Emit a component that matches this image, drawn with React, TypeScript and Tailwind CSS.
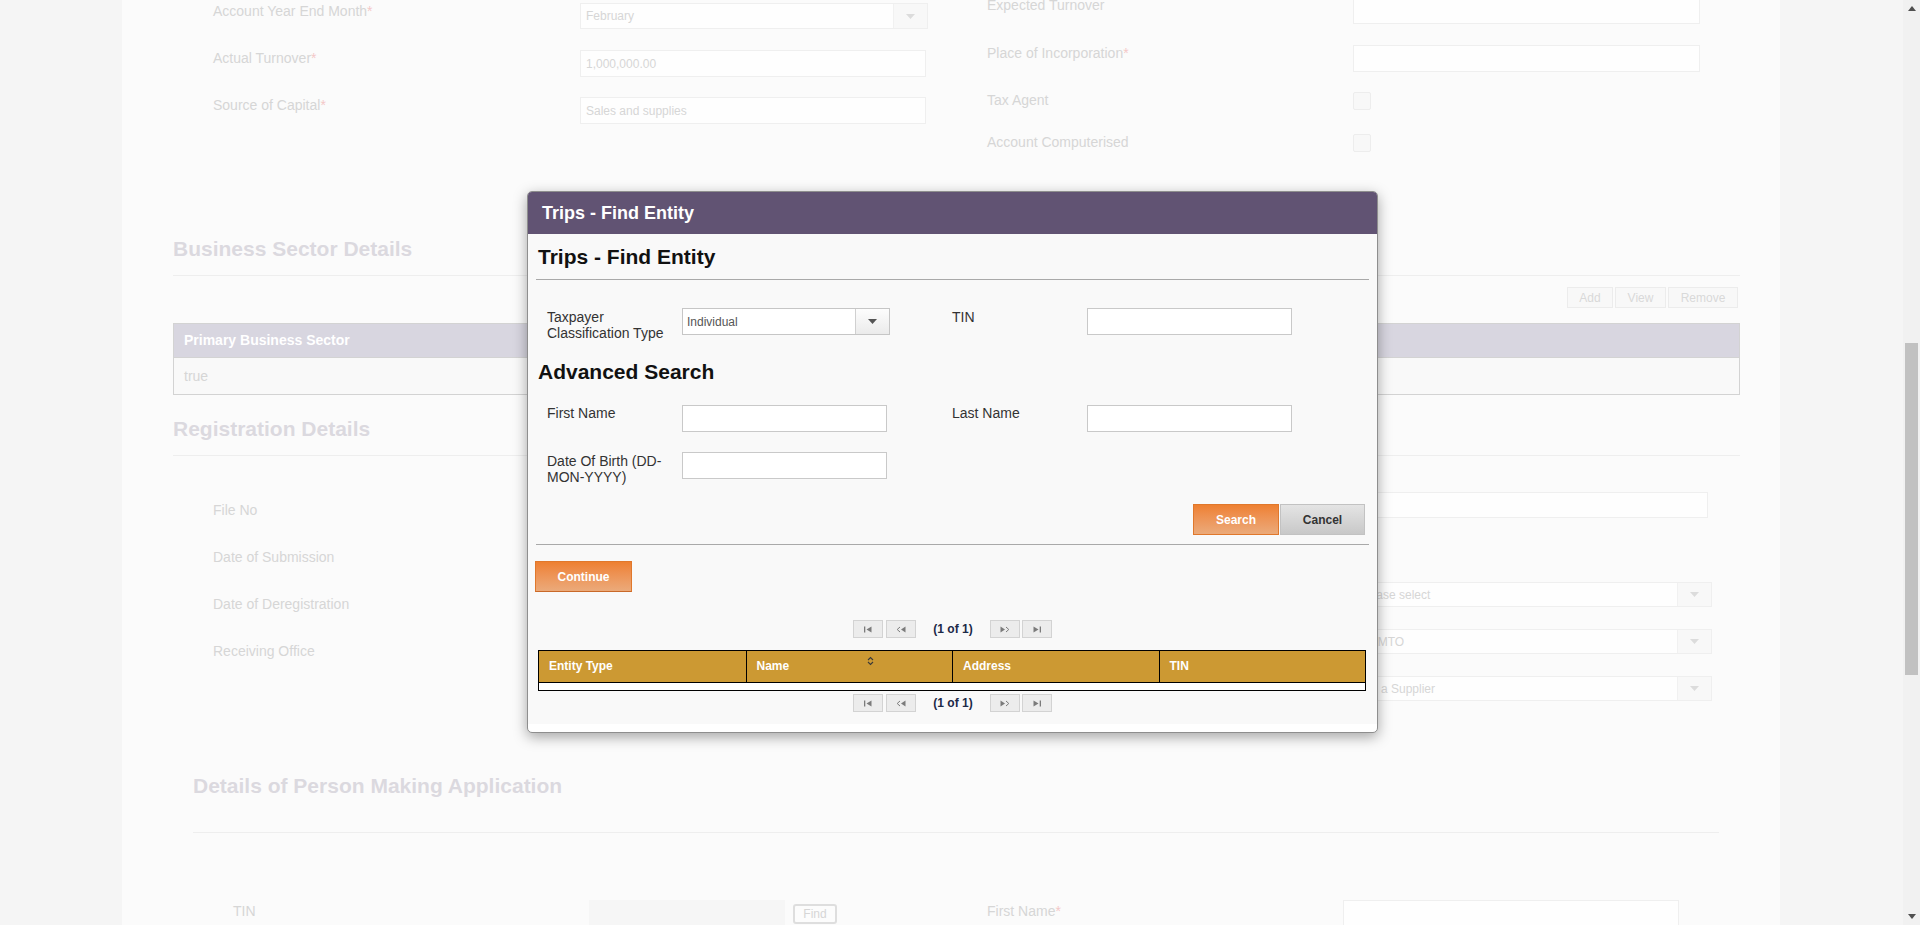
import React from "react";

function Caret({ className }: { className: string }) {
  return (
    <svg width="9" height="5" viewBox="0 0 9 5" className={className}>
      <path d="M0 0h9L4.5 5z" fill="currentColor" />
    </svg>
  );
}

function FadedLabel({ text, req }: { text: string; req?: boolean }) {
  return (
    <div className="text-[14px] leading-4 text-[#d6d6d6]">
      {text}
      {req && <span className="text-[#f4c8c8]">*</span>}
    </div>
  );
}

function FadedInput({ value, className }: { value?: string; className: string }) {
  return (
    <div className={`flex items-center border border-[#efefef] bg-[#fefefe] pl-[5px] text-[12px] text-[#d6d6d6] ${className}`}>
      {value}
    </div>
  );
}

function FadedSelect({ value, className }: { value: string; className: string }) {
  return (
    <div className={`flex border border-[#efefef] bg-[#fefefe] ${className}`}>
      <span className="flex flex-1 items-center pl-[5px] text-[12px] text-[#d6d6d6]">{value}</span>
      <span className="flex w-[34px] items-center justify-center border-l border-[#f1f1f1] bg-[#f8f8f8]">
        <Caret className="text-[#dcdcdc]" />
      </span>
    </div>
  );
}

function FadedCheck() {
  return <div className="h-[18px] w-[18px] rounded-[2px] border border-[#ededed] bg-[#f8f8f8]" />;
}

function FormRow({
  label,
  req,
  h,
  labelW,
  children,
}: {
  label: string;
  req?: boolean;
  h: string;
  labelW: string;
  children?: React.ReactNode;
}) {
  return (
    <div className={`flex items-start ${h}`}>
      <div className={`shrink-0 ${labelW}`}>
        <FadedLabel text={label} req={req} />
      </div>
      {children}
    </div>
  );
}

function TopForm() {
  return (
    <div className="flex h-[237px] items-start">
      <div className="ml-[91px] flex w-[715px] flex-col pt-[3px]">
        <FormRow label="Account Year End Month" req h="h-[47px]" labelW="w-[367px]">
          <FadedSelect value="February" className="h-[26px] w-[348px]" />
        </FormRow>
        <FormRow label="Actual Turnover" req h="h-[47px]" labelW="w-[367px]">
          <FadedInput value="1,000,000.00" className="h-[27px] w-[346px]" />
        </FormRow>
        <FormRow label="Source of Capital" req h="h-[47px]" labelW="w-[367px]">
          <FadedInput value="Sales and supplies" className="h-[27px] w-[346px]" />
        </FormRow>
      </div>
      <div className="-mt-[3px] ml-[59px] flex w-[713px] flex-col">
        <FormRow label="Expected Turnover" h="h-[48px]" labelW="w-[366px]">
          <FadedInput className="h-[27px] w-[347px]" />
        </FormRow>
        <FormRow label="Place of Incorporation" req h="h-[47px]" labelW="w-[366px]">
          <FadedInput className="h-[27px] w-[347px]" />
        </FormRow>
        <FormRow label="Tax Agent" h="h-[42px]" labelW="w-[366px]">
          <FadedCheck />
        </FormRow>
        <FormRow label="Account Computerised" h="h-[18px]" labelW="w-[366px]">
          <FadedCheck />
        </FormRow>
      </div>
    </div>
  );
}

function FadedHeading({ children }: { children: React.ReactNode }) {
  return <h2 className="h-[24px] text-[21px] font-bold leading-[24px] text-[#dbd9df]">{children}</h2>;
}

function BusinessSection() {
  return (
    <section className="ml-[51px] w-[1567px]">
      <FadedHeading>Business Sector Details</FadedHeading>
      <div className="mt-[14px] h-px bg-[#eeeeee]" />
      <div className="mt-[11px] flex h-[21px] justify-end gap-[2px] pr-[2px]">
        {[
          { t: "Add", w: "w-[46px]" },
          { t: "View", w: "w-[51px]" },
          { t: "Remove", w: "w-[70px]" },
        ].map((b) => (
          <div
            key={b.t}
            className={`flex items-center justify-center border border-[#ececec] bg-[#f8f8f8] text-[12px] text-[#d9d9d9] ${b.w}`}
          >
            {b.t}
          </div>
        ))}
      </div>
      <div className="mt-[15px] border border-[#d3d3d3]">
        <div className="flex h-[33px] items-center bg-[#d8d6e0] pl-[10px] text-[14px] font-bold text-white">
          Primary Business Sector
        </div>
        <div className="flex h-[37px] items-center border-t border-[#d3d3d3] bg-[#f9f9f9] pl-[10px] text-[14px] text-[#d6d6d6]">
          true
        </div>
      </div>

      <div className="mt-[22px]">
        <FadedHeading>Registration Details</FadedHeading>
      </div>
      <div className="mt-[14px] h-px bg-[#eeeeee]" />
      <div className="flex h-[318px] items-start">
        <div className="ml-[40px] flex w-[1140px] flex-col pt-[46px]">
          <FormRow label="File No" h="h-[47px]" labelW="w-[367px]" />
          <FormRow label="Date of Submission" h="h-[47px]" labelW="w-[367px]" />
          <FormRow label="Date of Deregistration" h="h-[47px]" labelW="w-[367px]" />
          <FormRow label="Receiving Office" h="h-[47px]" labelW="w-[367px]" />
        </div>
        <div className="flex w-[359px] flex-col pt-[36px]">
          <FadedInput className="h-[26px] w-[355px]" />
          <FadedSelect value="Please select" className="mt-[64px] h-[25px] w-[359px]" />
          <FadedSelect value="Ho MTO" className="mt-[22px] h-[25px] w-[359px]" />
          <FadedSelect value="Not a Supplier" className="mt-[22px] h-[25px] w-[359px]" />
        </div>
      </div>
    </section>
  );
}

function PersonSection() {
  return (
    <section className="ml-[71px] w-[1526px]">
      <FadedHeading>Details of Person Making Application</FadedHeading>
      <div className="mt-[34px] h-px bg-[#eeeeee]" />
      <div className="mt-[67px] flex items-start">
        <div className="ml-[40px] w-[356px] pt-[3px]">
          <FadedLabel text="TIN" />
        </div>
        <div className="h-[27px] w-[196px] bg-[#f6f6f6]" />
        <div className="ml-[8px] mt-[4px] flex h-[20px] w-[44px] items-center justify-center rounded-[3px] border-2 border-[#dedede] bg-[#fcfcfc] text-[12px] text-[#d6d6d6]">
          Find
        </div>
        <div className="ml-[150px] w-[356px] pt-[3px]">
          <FadedLabel text="First Name" req />
        </div>
        <div className="h-[27px] w-[336px] border border-[#efefef] bg-[#fefefe]" />
      </div>
    </section>
  );
}

function Scrollbar() {
  return (
    <div className="flex w-[17px] shrink-0 flex-col bg-[#f1f1f1]">
      <div className="flex h-[17px] items-center justify-center">
        <svg width="8" height="5" viewBox="0 0 8 5">
          <path d="M0 5h8L4 0z" fill="#505050" />
        </svg>
      </div>
      <div className="flex-1">
        <div className="mx-[2px] mt-[326px] h-[332px] bg-[#c1c1c1]" />
      </div>
      <div className="flex h-[17px] items-center justify-center">
        <svg width="8" height="5" viewBox="0 0 8 5">
          <path d="M0 0h8L4 5z" fill="#505050" />
        </svg>
      </div>
    </div>
  );
}

function PagerIcon({ kind }: { kind: "first" | "prev" | "next" | "last" }) {
  return (
    <svg width="10" height="7" viewBox="0 0 10 7" className="text-[#7b7b7b]">
      {kind === "first" && (
        <>
          <rect x="1" y="0.5" width="1.3" height="6" fill="currentColor" />
          <path d="M8.5 0.5v6L3.5 3.5z" fill="currentColor" />
        </>
      )}
      {kind === "prev" && (
        <>
          <path d="M4 1L1.2 3.5L4 6" stroke="currentColor" strokeWidth="1" fill="none" />
          <path d="M9.5 0.5v6L5 3.5z" fill="currentColor" />
        </>
      )}
      {kind === "next" && (
        <>
          <path d="M0.5 0.5v6L5 3.5z" fill="currentColor" />
          <path d="M6 1L8.8 3.5L6 6" stroke="currentColor" strokeWidth="1" fill="none" />
        </>
      )}
      {kind === "last" && (
        <>
          <path d="M1.5 0.5v6L6.5 3.5z" fill="currentColor" />
          <rect x="7.7" y="0.5" width="1.3" height="6" fill="currentColor" />
        </>
      )}
    </svg>
  );
}

function PagerBtn({ kind }: { kind: "first" | "prev" | "next" | "last" }) {
  return (
    <div className="flex h-[18px] w-[30px] items-center justify-center border border-[#d3d3d3] bg-[#ececec]">
      <PagerIcon kind={kind} />
    </div>
  );
}

function Pager({ className }: { className: string }) {
  return (
    <div className={`flex h-[18px] items-center justify-center ${className}`}>
      <PagerBtn kind="first" />
      <div className="w-[3px]" />
      <PagerBtn kind="prev" />
      <span className="mx-[17px] text-[12px] font-bold leading-[14px] text-[#1c2a48]">(1 of 1)</span>
      <PagerBtn kind="next" />
      <div className="w-[2px]" />
      <PagerBtn kind="last" />
    </div>
  );
}

function DialogLabel({ children }: { children: React.ReactNode }) {
  return <div className="w-[135px] shrink-0 text-[14px] leading-4 text-[#333333]">{children}</div>;
}

function DialogInput() {
  return <div className="h-[27px] w-[205px] shrink-0 border border-[#c9c9c9] bg-white" />;
}

function FindEntityDialog() {
  const orange =
    "flex h-[31px] items-center justify-center border border-[#e0782c] bg-gradient-to-b from-[#ee8030] to-[#ebaa7a] text-[12px] font-bold text-white";
  return (
    <div className="absolute left-[527px] top-[191px] w-[851px] overflow-hidden rounded-[5px] border border-[#8e8e8e] bg-white pb-[8px] shadow-[0_4px_14px_rgba(0,0,0,0.35)]">
      <div className="flex h-[42px] items-center bg-[#615373] pl-[14px] text-[18px] font-bold text-white">
        Trips - Find Entity
      </div>
      <div className="bg-[#f9f9f9] px-[8px] pb-[12px] pt-[11px]">
        <h3 className="h-[24px] pl-[2px] text-[21px] font-bold leading-[24px] text-[#111111]">
          Trips - Find Entity
        </h3>
        <div className="mt-[10px] h-px bg-[#a9a9a9]" />

        <div className="mt-[28px] flex h-[33px] items-start pl-[11px]">
          <DialogLabel>
            <div className="pt-[1px]">
              Taxpayer
              <br />
              Classification Type
            </div>
          </DialogLabel>
          <div className="flex h-[27px] w-[208px] shrink-0 border border-[#c6c6c6] bg-white">
            <span className="flex flex-1 items-center pl-[4px] text-[12px] text-[#555555]">Individual</span>
            <span className="flex w-[34px] items-center justify-center border-l border-[#d0d0d0] bg-gradient-to-b from-[#fdfdfd] to-[#ebebeb]">
              <Caret className="text-[#555555]" />
            </span>
          </div>
          <div className="w-[62px] shrink-0" />
          <DialogLabel>
            <div className="pt-[1px]">TIN</div>
          </DialogLabel>
          <DialogInput />
        </div>

        <h3 className="mt-[19px] h-[24px] pl-[2px] text-[21px] font-bold leading-[24px] text-[#111111]">
          Advanced Search
        </h3>

        <div className="mt-[21px] flex h-[27px] items-start pl-[11px]">
          <DialogLabel>First Name</DialogLabel>
          <DialogInput />
          <div className="w-[65px] shrink-0" />
          <DialogLabel>Last Name</DialogLabel>
          <DialogInput />
        </div>

        <div className="mt-[20px] flex h-[33px] items-start pl-[11px]">
          <DialogLabel>
            <div className="pt-[1px]">
              Date Of Birth (DD-
              <br />
              MON-YYYY)
            </div>
          </DialogLabel>
          <DialogInput />
        </div>

        <div className="mt-[19px] flex justify-end gap-[1px] pr-[4px]">
          <div className={`w-[86px] ${orange}`}>Search</div>
          <div className="flex h-[31px] w-[85px] items-center justify-center border border-[#c2c2c2] bg-gradient-to-b from-[#e4e4e4] to-[#c8c8c8] text-[12px] font-bold text-[#333333]">
            Cancel
          </div>
        </div>

        <div className="mt-[9px] h-px bg-[#a9a9a9]" />

        <div className={`-ml-[1px] mt-[16px] w-[97px] border-b-[#c9692a] ${orange}`}>Continue</div>

        <Pager className="mt-[28px]" />

        <div className="ml-[2px] mr-[3px] mt-[12px] border border-black bg-white">
          <div className="grid h-[31px] grid-cols-4 bg-[#cc9933] text-[12px] font-bold text-white">
            <div className="flex items-end pb-[7px] pl-[10px]">Entity Type</div>
            <div className="relative flex items-end border-l border-black pb-[7px] pl-[10px]">
              Name
              <svg
                width="7"
                height="10"
                viewBox="0 0 7 10"
                className="absolute left-[120px] top-[5px]"
              >
                <path d="M1 4L3.5 1.5L6 4M1 6L3.5 8.5L6 6" stroke="#3a3a3a" strokeWidth="1.1" fill="none" />
              </svg>
            </div>
            <div className="flex items-end border-l border-black pb-[7px] pl-[10px]">Address</div>
            <div className="flex items-end border-l border-black pb-[7px] pl-[10px]">TIN</div>
          </div>
          <div className="h-[8px] border-t border-black bg-white" />
        </div>

        <Pager className="mt-[3px]" />
      </div>
    </div>
  );
}

export default function App() {
  return (
    <div className="relative flex h-[925px] w-full overflow-hidden bg-[#f5f5f5] font-['Liberation_Sans',Arial,sans-serif]">
      <div className="w-[122px] shrink-0" />
      <main className="w-[1658px] shrink-0 bg-[#fbfbfb]">
        <TopForm />
        <BusinessSection />
        <PersonSection />
      </main>
      <div className="flex-1" />
      <Scrollbar />
      <FindEntityDialog />
    </div>
  );
}
